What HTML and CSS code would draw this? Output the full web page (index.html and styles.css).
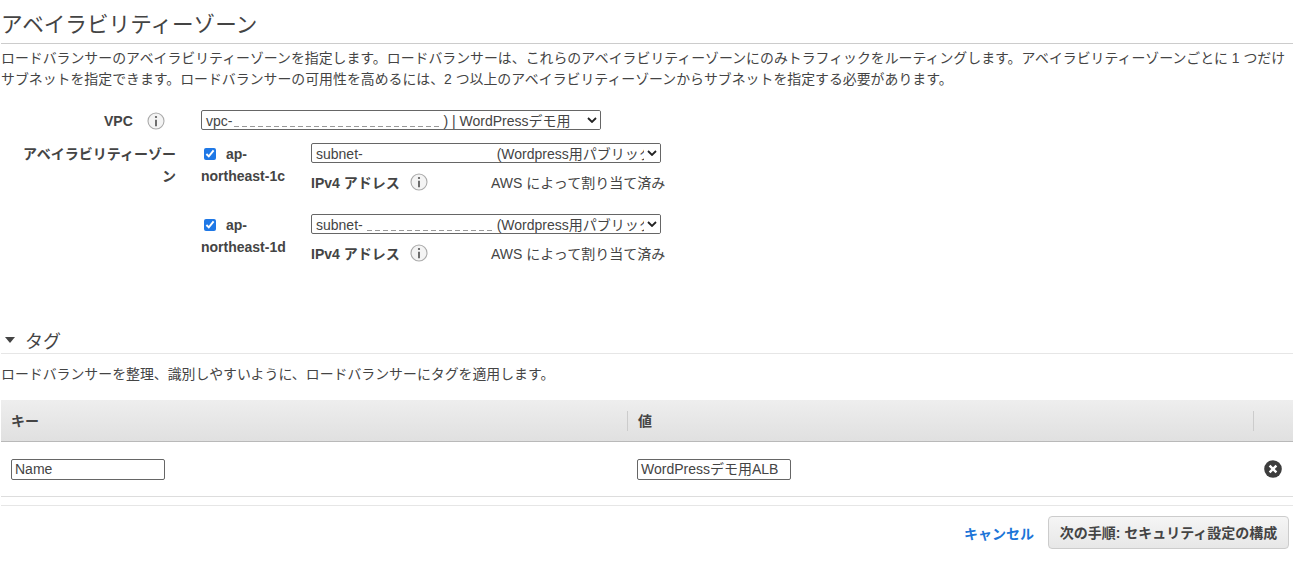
FILE: index.html
```html
<!DOCTYPE html>
<html lang="ja">
<head>
<meta charset="utf-8">
<title>アベイラビリティーゾーン</title>
<link rel="stylesheet" href="styles.css">
</head>
<body>
<main class="page">
  <h2 class="title">アベイラビリティーゾーン</h2>
  <p class="desc">ロードバランサーのアベイラビリティーゾーンを指定します。ロードバランサーは、これらのアベイラビリティーゾーンにのみトラフィックをルーティングします。アベイラビリティーゾーンごとに 1 つだけサブネットを指定できます。ロードバランサーの可用性を高めるには、2 つ以上のアベイラビリティーゾーンからサブネットを指定する必要があります。</p>

  <div class="form">
    <div class="label vpc-label"><b>VPC</b>
      <svg class="info" viewBox="0 0 18 18"><circle cx="9" cy="9" r="8"/><circle class="dot" cx="9" cy="5" r="1.1"/><path d="M9 7.8v6.4"/></svg>
    </div>
    <div class="select vpc-select"><span>vpc-</span><span class="mask m-vpc"></span><span>) | WordPressデモ用</span>
      <svg class="chev" viewBox="0 0 10 6"><path d="M1 1l4 4 4-4"/></svg>
    </div>

    <div class="label az-label"><b>アベイラビリティーゾーン</b></div>
    <div class="az-list">
      <div class="az">
        <div class="az-name"><input type="checkbox" checked><b class="ap">ap-</b><b class="nb">northeast-1c</b></div>
        <div class="az-detail">
          <div class="select sub-select"><span>subnet-</span><span class="blank"></span><span>(Wordpress用パブリック</span>
            <svg class="chev" viewBox="0 0 10 6"><path d="M1 1l4 4 4-4"/></svg>
          </div>
          <div class="ip"><b class="ip-label">IPv4 アドレス</b>
            <svg class="info" viewBox="0 0 18 18"><circle cx="9" cy="9" r="8"/><circle class="dot" cx="9" cy="5" r="1.1"/><path d="M9 7.8v6.4"/></svg>
            <span class="ip-val">AWS によって割り当て済み</span>
          </div>
        </div>
      </div>
      <div class="az">
        <div class="az-name"><input type="checkbox" checked><b class="ap">ap-</b><b class="nb">northeast-1d</b></div>
        <div class="az-detail">
          <div class="select sub-select"><span>subnet-</span><span class="mask m-sub"></span><span>(Wordpress用パブリック</span>
            <svg class="chev" viewBox="0 0 10 6"><path d="M1 1l4 4 4-4"/></svg>
          </div>
          <div class="ip"><b class="ip-label">IPv4 アドレス</b>
            <svg class="info" viewBox="0 0 18 18"><circle cx="9" cy="9" r="8"/><circle class="dot" cx="9" cy="5" r="1.1"/><path d="M9 7.8v6.4"/></svg>
            <span class="ip-val">AWS によって割り当て済み</span>
          </div>
        </div>
      </div>
    </div>
  </div>

  <h3 class="tag-title"><span class="caret"></span>タグ</h3>
  <p class="tag-desc">ロードバランサーを整理、識別しやすいように、ロードバランサーにタグを適用します。</p>

  <div class="table">
    <div class="thead">
      <div class="th col-key">キー</div>
      <div class="th col-val">値</div>
      <div class="th col-act"></div>
    </div>
    <div class="tbody">
      <div class="col-key"><input class="field key-field" type="text" value="Name"></div>
      <div class="col-val"><div class="field val-field">WordPressデモ用ALB</div></div>
      <div class="col-act">
        <svg class="remove" viewBox="0 0 18 18"><circle cx="9" cy="9" r="8.8"/><path d="M5.6 5.6l6.8 6.8M12.4 5.6l-6.8 6.8"/></svg>
      </div>
    </div>
  </div>

  <div class="actions">
    <a class="cancel" href="#">キャンセル</a>
    <button class="next" type="button">次の手順: セキュリティ設定の構成</button>
  </div>
</main>
</body>
</html>
```

FILE: styles.css
```css
* { box-sizing: border-box; }
html, body { margin: 0; padding: 0; background: #fff; }
body {
  font-family: "Liberation Sans", "Noto Sans CJK JP", sans-serif;
  font-size: 14px;
  color: #444;
  overflow: hidden;
}
.page { width: 1292px; height: 563px; margin-left: 1px; }
b { font-weight: 700; }

.title {
  margin: 0;
  height: 44px;
  padding: 11px 0 0 0;
  font-size: 21.6px;
  line-height: 28px;
  font-weight: 400;
  border-bottom: 1px solid #ccc;
}
.desc {
  margin: 4px 0 0 0;
  font-size: 13.9px;
  line-height: 21px;
  height: 42px;
}

.form {
  display: grid;
  grid-template-columns: 175px 1fr;
  column-gap: 25px;
  row-gap: 13px;
  margin-top: 20px;
}
.label { display: flex; justify-content: flex-end; text-align: right; }
.vpc-label { justify-content: flex-start; align-items: center; padding: 2px 0 0 103px; gap: 14px; height: 20px; }
.az-label { padding-left: 21px; line-height: 22px; }

.info { width: 18px; height: 18px; flex: none; }
.info circle { fill: #f4f4f4; stroke: #aaa; stroke-width: 1.1; }
.info circle.dot { fill: #555; stroke: none; }
.info path { fill: none; stroke: #555; stroke-width: 1.7; }

.select {
  display: flex;
  align-items: flex-end;
  position: relative;
  height: 20px;
  padding: 0 0 0 4px;
  border: 1px solid #666;
  border-radius: 2px;
  background: #fff;
  font-size: 14px;
  line-height: 16px;
  white-space: nowrap;
  overflow: hidden;
  color: #444;
}
.vpc-select { width: 400px; }
.sub-select { width: 350px; }
.chev { position: absolute; right: 0; top: 0; width: 16px; height: 18px; padding: 6px 3px; background: #fff; }
.chev path { fill: none; stroke: #222; stroke-width: 1.8; }
.mask {
  display: block;
  height: 1px;
  margin-bottom: 2px;
  background: repeating-linear-gradient(90deg, #999 0 5px, transparent 5px 8px);
}
.m-vpc { width: 207px; flex: none; margin-left: 2px; margin-right: 2px; }
.m-sub { width: 126px; margin: 0 4px 2px 4px; flex: none; }
.blank { display: block; width: 134px; flex: none; }

.az-list { display: flex; flex-direction: column; gap: 17px; }
.az { display: grid; grid-template-columns: 110px 1fr; height: 54px; }
.az-name { line-height: 22px; white-space: nowrap; }
.az-name input {
  width: 12px; height: 12px;
  margin: 0 10px 0 3px;
  vertical-align: -1px;
  accent-color: #1f78e6;
}
.nb { display: block; }
.ip { display: flex; align-items: center; margin-top: 9px; height: 20px; }
.ip-label { width: 99px; white-space: nowrap; }
.ip-val { margin-left: 63px; white-space: nowrap; }

.tag-title {
  display: flex;
  align-items: center;
  margin: 55px 0 0 0;
  height: 31px;
  padding: 3px 0 0 4px;
  font-size: 18px;
  font-weight: 400;
  border-bottom: 1px solid #e6e6e6;
}
.caret {
  width: 0; height: 0;
  margin-right: 10px;
  border-left: 5.5px solid transparent;
  border-right: 5.5px solid transparent;
  border-top: 6px solid #444;
}
.tag-desc {
  margin: 11px 0 0 0;
  font-size: 13.9px;
  line-height: 19px;
}

.table { margin-top: 16px; border-bottom: 1px solid #ddd; }
.thead {
  display: flex;
  align-items: center;
  height: 42px;
  background: linear-gradient(#eeeeee, #e0e0e0);
  border-bottom: 1px solid #b9b9b9;
}
.th { font-weight: 700; height: 20px; line-height: 20px; color: #444; }
.th.col-val { border-left: 1px solid #ccc; padding-left: 10px; }
.th.col-act { border-left: 1px solid #ccc; }
.col-key { width: 626px; padding-left: 10px; flex: none; }
.col-val { width: 626px; flex: none; }
.col-act { flex: 1; display: flex; justify-content: flex-end; padding-right: 11px; }
.tbody .col-val { padding-left: 10px; }
.tbody { display: flex; align-items: center; height: 54px; }

.field {
  display: block;
  height: 21px;
  width: 154px;
  padding: 0 3px;
  border: 1px solid #666;
  border-radius: 2px;
  background: #fff;
  font-family: "Liberation Sans", "Noto Sans CJK JP", sans-serif;
  font-size: 14px;
  line-height: 19px;
  color: #444;
  white-space: nowrap;
  overflow: hidden;
}
.remove { width: 18px; height: 18px; display: block; }
.remove circle { fill: #3d3d3d; }
.remove path { stroke: #fff; stroke-width: 2.4; fill: none; }

.actions {
  display: flex;
  justify-content: flex-end;
  align-items: center;
  gap: 14px;
  margin-top: 8px;
  padding: 10px 4px 0 0;
  border-top: 1px solid #e6e6e6;
}
.cancel { color: #1c75d8; font-weight: 700; text-decoration: none; }
.next {
  width: 241px;
  height: 33px;
  padding: 0 0 2px;
  border: 1px solid #ccc;
  border-radius: 4px;
  background: linear-gradient(#f5f5f5, #e7e7e7);
  font-family: "Liberation Sans", "Noto Sans CJK JP", sans-serif;
  font-size: 14px;
  font-weight: 700;
  color: #444;
}
```
